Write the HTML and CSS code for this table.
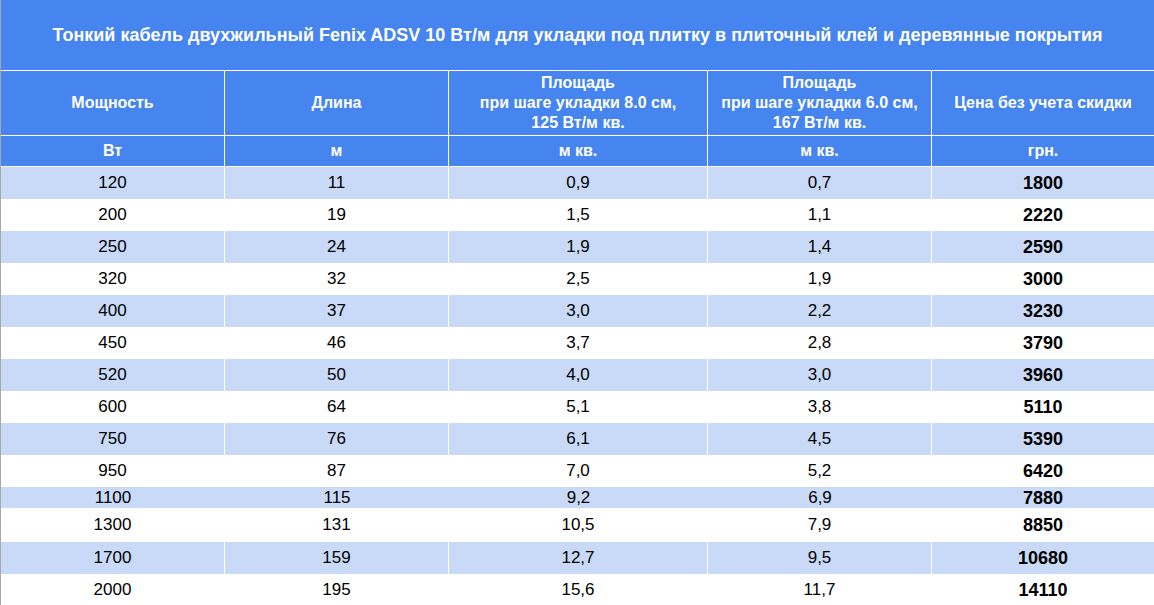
FILE: index.html
```html
<!DOCTYPE html>
<html lang="ru">
<head>
<meta charset="utf-8">
<title>Fenix ADSV 10</title>
<link rel="stylesheet" href="styles.css">
</head>
<body>
<div class="sheet">
<table class="price">
<colgroup>
<col class="c1"><col class="c2"><col class="c3"><col class="c4"><col class="c5">
</colgroup>
<thead>
<tr class="title-row"><th colspan="5">Тонкий кабель двухжильный Fenix ADSV 10 Вт/м для укладки под плитку в плиточный клей и деревянные покрытия</th></tr>
<tr class="head-row">
<th>Мощность</th>
<th>Длина</th>
<th>Площадь<br>при шаге укладки 8.0 см,<br>125 Вт/м кв.</th>
<th>Площадь<br>при шаге укладки 6.0 см,<br>167 Вт/м кв.</th>
<th>Цена без учета скидки</th>
</tr>
<tr class="unit-row"><th>Вт</th><th>м</th><th>м кв.</th><th>м кв.</th><th>грн.</th></tr>
</thead>
<tbody>
<tr class="alt"><td>120</td><td>11</td><td>0,9</td><td>0,7</td><td class="price-cell">1800</td></tr>
<tr><td>200</td><td>19</td><td>1,5</td><td>1,1</td><td class="price-cell">2220</td></tr>
<tr class="alt"><td>250</td><td>24</td><td>1,9</td><td>1,4</td><td class="price-cell">2590</td></tr>
<tr><td>320</td><td>32</td><td>2,5</td><td>1,9</td><td class="price-cell">3000</td></tr>
<tr class="alt"><td>400</td><td>37</td><td>3,0</td><td>2,2</td><td class="price-cell">3230</td></tr>
<tr><td>450</td><td>46</td><td>3,7</td><td>2,8</td><td class="price-cell">3790</td></tr>
<tr class="alt"><td>520</td><td>50</td><td>4,0</td><td>3,0</td><td class="price-cell">3960</td></tr>
<tr><td>600</td><td>64</td><td>5,1</td><td>3,8</td><td class="price-cell">5110</td></tr>
<tr class="alt"><td>750</td><td>76</td><td>6,1</td><td>4,5</td><td class="price-cell">5390</td></tr>
<tr><td>950</td><td>87</td><td>7,0</td><td>5,2</td><td class="price-cell">6420</td></tr>
<tr class="alt thin"><td>1100</td><td>115</td><td>9,2</td><td>6,9</td><td class="price-cell">7880</td></tr>
<tr class="tall"><td>1300</td><td>131</td><td>10,5</td><td>7,9</td><td class="price-cell">8850</td></tr>
<tr class="alt"><td>1700</td><td>159</td><td>12,7</td><td>9,5</td><td class="price-cell">10680</td></tr>
<tr><td>2000</td><td>195</td><td>15,6</td><td>11,7</td><td class="price-cell">14110</td></tr>
</tbody>
</table>
</div>
</body>
</html>
```

FILE: styles.css
```css
html, body {
  margin: 0;
  padding: 0;
  background: #ffffff;
}

.sheet {
  border-left: 1px solid #a8a8a8;
  width: 1153px;
  overflow: hidden;
}

.price {
  width: 1153px;
  table-layout: fixed;
  border-collapse: separate;
  border-spacing: 0;
  font-family: "Liberation Sans", Arial, sans-serif;
  color: #000;
}

.c1 { width: 224px; }
.c2 { width: 224px; }
.c3 { width: 259px; }
.c4 { width: 224px; }
.c5 { width: 222px; }

.price th,
.price td {
  box-sizing: border-box;
  padding: 0;
  text-align: center;
  vertical-align: middle;
  border-right: 1px solid #ffffff;
  border-bottom: 1px solid #ffffff;
}

.price th:last-child,
.price td:last-child {
  border-right: 0;
}

.price th {
  background: #4685ef;
  color: #ffffff;
  font-weight: bold;
  font-size: 16px;
  line-height: 20px;
  white-space: nowrap;
}

.title-row th {
  height: 71px;
  font-size: 18px;
  border-right: 0;
}

.head-row th {
  height: 65px;
}

.unit-row th {
  height: 31px;
}

.price td {
  height: 32px;
  font-size: 17px;
  line-height: 20px;
  border-bottom: 0;
}

.price tr.alt td {
  background: #c9daf8;
}

.price tr.thin td {
  height: 21px;
  border-right: 0;
}

.price tr.tall td {
  height: 34px;
}

.price td.price-cell {
  font-weight: bold;
  font-size: 18px;
}
```
